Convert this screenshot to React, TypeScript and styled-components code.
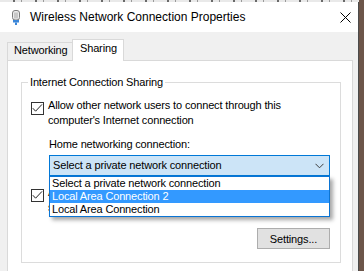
import React from "react";
import styled, { createGlobalStyle } from "styled-components";

const GlobalStyle = createGlobalStyle`
  html, body { margin: 0; padding: 0; }
  body {
    width: 364px;
    height: 271px;
    overflow: hidden;
    background: #6c5549;
    font-family: "Liberation Sans", Arial, sans-serif;
    font-size: 11px;
    letter-spacing: -0.15px;
    color: #000;
  }
`;

const Screen = styled.div`
  display: flex;
  flex-direction: column;
  height: 271px;
`;

const BehindStrip = styled.div`
  width: 359px;
  height: 2px;
  background: repeating-linear-gradient(90deg, #e9e9e9 0 13px, #6a6a6a 13px 15px, #e9e9e9 15px 21px, #9a9a9a 21px 22px);
`;

const Window = styled.div`
  flex: 1;
  width: 359px;
  box-sizing: border-box;
  border-right: 1px solid #4b4b4b;
  background: #f0f0f0;
  display: flex;
  flex-direction: column;
  overflow: hidden;
`;

const TitleBar = styled.div`
  height: 30px;
  flex: none;
  background: #fff;
  display: flex;
  align-items: center;
  padding: 0 7px 0 12px;
`;

const Title = styled.span`
  flex: 1;
  margin-left: 10px;
  font-size: 12px;
  letter-spacing: 0;
`;

const Body = styled.div`
  flex: 1;
  padding: 7px 5px 0 7px;
  display: flex;
  flex-direction: column;
`;

const TabRow = styled.div`
  display: flex;
  align-items: flex-end;
  height: 22px;
  margin-bottom: -1px;
  position: relative;
  z-index: 1;
`;

const Tab = styled.div<{ $active?: boolean; $w: number }>`
  box-sizing: border-box;
  width: ${(p) => p.$w}px;
  height: ${(p) => (p.$active ? 22 : 18)}px;
  margin-bottom: ${(p) => (p.$active ? 0 : 1)}px;
  margin-left: ${(p) => (p.$active ? -1 : 0)}px;
  padding: ${(p) => (p.$active ? "1px 0 0 7px" : "0 0 0 6px")};
  line-height: 15px;
  border: 1px solid #d9d9d9;
  border-bottom: none;
  background: ${(p) => (p.$active ? "#fff" : "#f0f0f0")};
  white-space: nowrap;
`;

const Panel = styled.div`
  flex: none;
  height: 240px;
  background: #fff;
  border: 1px solid #d9d9d9;
  padding: 0 11px 0 13px;
`;

const GroupBox = styled.fieldset`
  margin: 14px 0 0;
  padding: 0 10px 13px 9px;
  border: 1px solid #dcdcdc;
  min-width: 0;
  display: flex;
  flex-direction: column;
`;

const Legend = styled.legend`
  margin-left: -3px;
  padding: 0 2px;
  line-height: 15px;
`;

const CheckRow = styled.div<{ $top: number }>`
  display: flex;
  align-items: flex-start;
  gap: 4px;
  margin-top: ${(p) => p.$top}px;
  line-height: 15px;
`;

const Box = styled.span`
  flex: none;
  width: 13px;
  height: 13px;
  margin-top: 4px;
  box-sizing: border-box;
  border: 1px solid #333;
  background: #fff;
  display: flex;
`;

const Lines = styled.span`
  white-space: nowrap;
  span { display: block; }
`;

const Indent = styled.div`
  padding-left: 18px;
  margin-top: 9px;
  line-height: 15px;
`;

const ComboWrap = styled.div`
  position: relative;
  margin-top: 3px;
`;

const Combo = styled.div`
  height: 21px;
  box-sizing: border-box;
  border: 1px solid #0078d7;
  background: #cce4f7;
  display: flex;
  align-items: center;
  padding: 0 5px 0 3px;
  line-height: 19px;
`;

const ComboText = styled.span`
  flex: 1;
  white-space: nowrap;
`;

const DropList = styled.div`
  position: absolute;
  top: 100%;
  left: 0;
  right: 0;
  z-index: 2;
  border: 1px solid #0a74d4;
  background: #fff;
  box-shadow: 3px 3px 4px rgba(0, 0, 0, 0.35);
`;

const Option = styled.div<{ $selected?: boolean }>`
  height: 13px;
  line-height: 13px;
  padding-left: 2px;
  white-space: nowrap;
  background: ${(p) => (p.$selected ? "#3399ff" : "transparent")};
  color: ${(p) => (p.$selected ? "#fff" : "#000")};
`;

const Button = styled.button`
  align-self: flex-end;
  margin-top: 13px;
  width: 73px;
  height: 21px;
  padding: 0;
  border: 1px solid #adadad;
  background: #e1e1e1;
  font: inherit;
  letter-spacing: inherit;
  color: #000;
`;

const Check = () => (
  <Box>
    <svg width="11" height="11" viewBox="0 0 11 11">
      <polyline points="0.8,5.2 3.6,8.2 10,1.4" fill="none" stroke="#222" strokeWidth="1" />
    </svg>
  </Box>
);

const AdapterIcon = () => (
  <svg width="8" height="15" viewBox="0 0 8 15">
    <rect x="0.5" y="0.5" width="7" height="9.5" rx="2.5" fill="#ececec" stroke="#7d7d7d" />
    <path d="M3 2.5v6M5 2.5v6" stroke="#a3a3a3" />
    <rect x="1" y="10" width="6" height="2.5" fill="#3b86d8" />
    <rect x="3" y="12.5" width="2" height="2.5" fill="#3b86d8" />
  </svg>
);

const CloseIcon = () => (
  <svg width="11" height="11" viewBox="0 0 11 11">
    <path d="M0.5 0.5L10.5 10.5M10.5 0.5L0.5 10.5" stroke="#000" strokeWidth="1" />
  </svg>
);

const Chevron = () => (
  <svg width="9" height="6" viewBox="0 0 9 6">
    <polyline points="0.5,0.8 4.5,4.8 8.5,0.8" fill="none" stroke="#3c3c3c" strokeWidth="1" />
  </svg>
);

export default function App() {
  return (
    <>
      <GlobalStyle />
      <Screen>
        <BehindStrip />
        <Window>
          <TitleBar>
            <AdapterIcon />
            <Title>Wireless Network Connection Properties</Title>
            <CloseIcon />
          </TitleBar>
          <Body>
            <TabRow>
              <Tab $w={66}>Networking</Tab>
              <Tab $w={52} $active>Sharing</Tab>
            </TabRow>
            <Panel>
              <GroupBox>
                <Legend>Internet Connection Sharing</Legend>
                <CheckRow $top={8}>
                  <Check />
                  <Lines>
                    <span>Allow other network users to connect through this</span>
                    <span>computer's Internet connection</span>
                  </Lines>
                </CheckRow>
                <Indent>
                  Home networking connection:
                  <ComboWrap>
                    <Combo>
                      <ComboText>Select a private network connection</ComboText>
                      <Chevron />
                    </Combo>
                    <DropList>
                      <Option>Select a private network connection</Option>
                      <Option $selected>Local Area Connection 2</Option>
                      <Option>Local Area Connection</Option>
                    </DropList>
                  </ComboWrap>
                </Indent>
                <CheckRow $top={9}>
                  <Check />
                  <Lines>
                    <span>Allow other network users to control or disable the</span>
                    <span>shared Internet connection</span>
                  </Lines>
                </CheckRow>
                <Button>Settings...</Button>
              </GroupBox>
            </Panel>
          </Body>
        </Window>
      </Screen>
    </>
  );
}
